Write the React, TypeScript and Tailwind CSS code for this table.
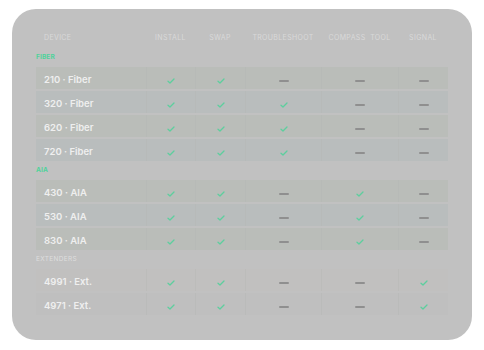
import React from 'react';

type Mark = 'y' | 'n';

const groups: { label: string; green: boolean; rows: { name: string; marks: Mark[] }[] }[] = [
  {
    label: 'FIBER',
    green: true,
    rows: [
      { name: '210 · Fiber', marks: ['y', 'y', 'n', 'n', 'n'] },
      { name: '320 · Fiber', marks: ['y', 'y', 'y', 'n', 'n'] },
      { name: '620 · Fiber', marks: ['y', 'y', 'y', 'n', 'n'] },
      { name: '720 · Fiber', marks: ['y', 'y', 'y', 'n', 'n'] },
    ],
  },
  {
    label: 'AIA',
    green: true,
    rows: [
      { name: '430 · AIA', marks: ['y', 'y', 'n', 'y', 'n'] },
      { name: '530 · AIA', marks: ['y', 'y', 'n', 'y', 'n'] },
      { name: '830 · AIA', marks: ['y', 'y', 'n', 'y', 'n'] },
    ],
  },
  {
    label: 'EXTENDERS',
    green: false,
    rows: [
      { name: '4991 · Ext.', marks: ['y', 'y', 'n', 'n', 'y'] },
      { name: '4971 · Ext.', marks: ['y', 'y', 'n', 'n', 'y'] },
    ],
  },
];

const cols = ['INSTALL', 'SWAP', 'TROUBLESHOOT', 'COMPASS  TOOL', 'SIGNAL'];
const grid = 'grid grid-cols-[110px_49px_50px_76px_77px_50px]';

const Check = () => (
  <svg width="8" height="6" viewBox="0 0 8 6" fill="none">
    <path d="M1 3.2 L3 5 L7 1" stroke="#5dcf9e" strokeWidth="1.3" strokeLinecap="round" strokeLinejoin="round" />
  </svg>
);

const Dash = () => <div className="w-[10px] h-[2px] rounded-full bg-[#8f8f8f]" />;

export default function App() {
  return (
    <div className="w-[484px] h-[350px] bg-white pt-[9px] pl-[12px]" style={{ fontFamily: 'Inter, "Liberation Sans", sans-serif' }}>
      <div className="w-[460px] h-[331px] rounded-[24px] bg-[#c1c1c1] px-[24px] pt-[20px]">
        {/* header */}
        <div className={`${grid} h-[19px] items-center text-[7px] tracking-[0.05em] text-[#d9d9d9]`}>
          <div className="pl-[8px]">DEVICE</div>
          {cols.map((c) => (
            <div key={c} className="text-center whitespace-pre">{c}</div>
          ))}
        </div>

        {groups.map((g) => (
          <div key={g.label}>
            <div
              className={`h-[19px] flex items-center text-[6.5px] ${
                g.green ? 'font-bold tracking-[0.02em] text-[#4fd39b]' : 'tracking-[0.05em] text-[#dedede]'
              }`}
            >
              {g.label}
            </div>
            <div className="flex flex-col gap-[2px]">
              {g.rows.map((r, ri) => {
                const bg = g.green
                  ? ri % 2 === 0
                    ? 'bg-[#babdb9]'
                    : 'bg-[#b9bdbd]'
                  : ri % 2 === 0
                    ? 'bg-[#c1c0bf]'
                    : 'bg-[#bfbfbf]';
                return (
                  <div key={r.name} className={`${grid} h-[22px] items-stretch ${bg}`}>
                    <div className="pl-[8px] pt-[5px] flex items-center text-[9.5px] font-semibold text-[#efefef]">{r.name}</div>
                    {r.marks.map((m, mi) => (
                      <div key={mi} className="pt-[5px] flex items-center justify-center border-l border-[#b4b7b4]/40">
                        {m === 'y' ? <Check /> : <Dash />}
                      </div>
                    ))}
                  </div>
                );
              })}
            </div>
          </div>
        ))}
      </div>
    </div>
  );
}
